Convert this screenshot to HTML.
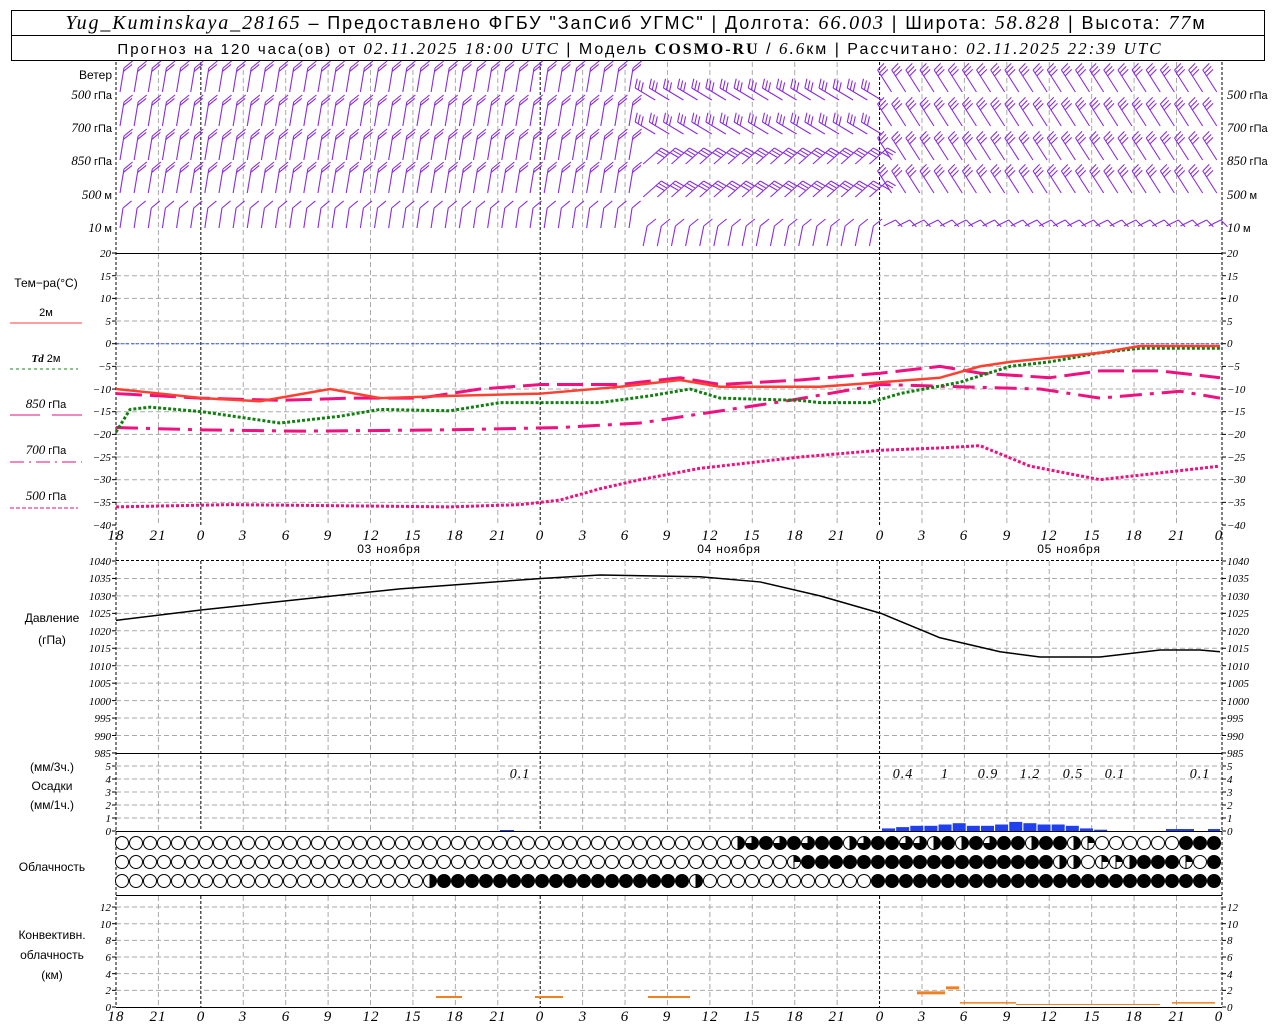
<!DOCTYPE html>
<html><head><meta charset="utf-8"><style>
html,body{margin:0;padding:0;background:#fff;}
svg{display:block;font-family:"Liberation Sans",sans-serif;}
.t{font-style:italic;font-family:"Liberation Serif",serif;}
.l{font-size:12px;}
</style></head><body>
<svg id="s" width="1280" height="1024" viewBox="0 0 1280 1024" xmlns="http://www.w3.org/2000/svg">
<rect x="0" y="0" width="1280" height="1024" fill="#fff"/>
<rect x="11.5" y="10.5" width="1253" height="50" fill="none" stroke="#000"/>
<line x1="11" y1="35.5" x2="1265" y2="35.5" stroke="#000"/>
<text x="636" y="29" text-anchor="middle" font-size="18" letter-spacing="1.9"><tspan font-family="Liberation Serif" font-style="italic" font-size="20">Yug_Kuminskaya_28165</tspan> – Предоставлено ФГБУ "ЗапСиб УГМС" | Долгота: <tspan font-family="Liberation Serif" font-style="italic" font-size="20">66.003</tspan> | Широта: <tspan font-family="Liberation Serif" font-style="italic" font-size="20">58.828</tspan> | Высота: <tspan font-family="Liberation Serif" font-style="italic" font-size="20">77</tspan>м</text>
<text x="640" y="54" text-anchor="middle" font-size="16" letter-spacing="2"><tspan font-size="15">Прогноз на 120 часа(ов) от </tspan><tspan font-family="Liberation Serif" font-style="italic" font-size="17">02.11.2025 18:00 UTC</tspan> | Модель <tspan font-family="Liberation Serif" font-weight="bold" font-size="16">COSMO-RU</tspan> / <tspan font-family="Liberation Serif" font-style="italic" font-size="17">6.6</tspan>км | Рассчитано: <tspan font-family="Liberation Serif" font-style="italic" font-size="17">02.11.2025 22:39 UTC</tspan></text>
<g id="g"></g>
<g class="l">
<text x="112" y="79" text-anchor="end">Ветер</text>
<text x="112" y="99" text-anchor="end" font-size="11"><tspan class="t" font-size="13">500</tspan> гПа</text>
<text x="112" y="132" text-anchor="end" font-size="11"><tspan class="t" font-size="13">700</tspan> гПа</text>
<text x="112" y="165" text-anchor="end" font-size="11"><tspan class="t" font-size="13">850</tspan> гПа</text>
<text x="112" y="199" text-anchor="end" font-size="11"><tspan class="t" font-size="13">500</tspan>  м</text>
<text x="112" y="232" text-anchor="end" font-size="11"><tspan class="t" font-size="13">10</tspan>   м</text>
<text x="1227" y="99" font-size="11"><tspan class="t" font-size="13">500</tspan> гПа</text>
<text x="1227" y="132" font-size="11"><tspan class="t" font-size="13">700</tspan> гПа</text>
<text x="1227" y="165" font-size="11"><tspan class="t" font-size="13">850</tspan> гПа</text>
<text x="1227" y="199" font-size="11"><tspan class="t" font-size="13">500</tspan>  м</text>
<text x="1227" y="232" font-size="11"><tspan class="t" font-size="13">10</tspan>   м</text>
<text x="46" y="287" text-anchor="middle">Тем−ра(°С)</text>
<text x="46" y="316" text-anchor="middle" font-size="11">2м</text>
<text x="46" y="362" text-anchor="middle" font-size="11"><tspan class="t" font-weight="bold">Td</tspan>  2м</text>
<text x="46" y="408" text-anchor="middle" font-size="11"><tspan class="t" font-size="13">850</tspan> гПа</text>
<text x="46" y="454" text-anchor="middle" font-size="11"><tspan class="t" font-size="13">700</tspan> гПа</text>
<text x="46" y="500" text-anchor="middle" font-size="11"><tspan class="t" font-size="13">500</tspan> гПа</text>
<text x="52" y="622" text-anchor="middle">Давление</text>
<text x="52" y="644" text-anchor="middle">(гПа)</text>
<text x="52" y="771" text-anchor="middle">(мм/3ч.)</text>
<text x="52" y="790" text-anchor="middle">Осадки</text>
<text x="52" y="809" text-anchor="middle">(мм/1ч.)</text>
<text x="52" y="871" text-anchor="middle">Облачность</text>
<text x="52" y="939" text-anchor="middle">Конвективн.</text>
<text x="52" y="959" text-anchor="middle">облачность</text>
<text x="52" y="979" text-anchor="middle">(км)</text>
<text x="389" y="553" text-anchor="middle" letter-spacing="0.8">03 ноября</text>
<text x="729" y="553" text-anchor="middle" letter-spacing="0.8">04 ноября</text>
<text x="1069" y="553" text-anchor="middle" letter-spacing="0.8">05 ноября</text>
</g>
<g class="t" font-size="14" letter-spacing="1">
<text x="520" y="778" text-anchor="middle">0.1</text>
<text x="903" y="778" text-anchor="middle">0.4</text>
<text x="945" y="778" text-anchor="middle">1</text>
<text x="988" y="778" text-anchor="middle">0.9</text>
<text x="1030" y="778" text-anchor="middle">1.2</text>
<text x="1073" y="778" text-anchor="middle">0.5</text>
<text x="1115" y="778" text-anchor="middle">0.1</text>
<text x="1200" y="778" text-anchor="middle">0.1</text>
</g>
<g class="t" font-size="15" text-anchor="middle" letter-spacing="1">
<text x="116" y="540">18</text><text x="158" y="540">21</text><text x="201" y="540">0</text><text x="243" y="540">3</text><text x="286" y="540">6</text><text x="328" y="540">9</text><text x="371" y="540">12</text><text x="413" y="540">15</text><text x="455" y="540">18</text><text x="498" y="540">21</text><text x="540" y="540">0</text><text x="583" y="540">3</text><text x="625" y="540">6</text><text x="667" y="540">9</text><text x="710" y="540">12</text><text x="752" y="540">15</text><text x="795" y="540">18</text><text x="837" y="540">21</text><text x="880" y="540">0</text><text x="922" y="540">3</text><text x="964" y="540">6</text><text x="1007" y="540">9</text><text x="1049" y="540">12</text><text x="1092" y="540">15</text><text x="1134" y="540">18</text><text x="1177" y="540">21</text><text x="1219" y="540">0</text>
</g>
<g class="t" font-size="15" text-anchor="middle" letter-spacing="1">
<text x="116" y="1021">18</text><text x="158" y="1021">21</text><text x="201" y="1021">0</text><text x="243" y="1021">3</text><text x="286" y="1021">6</text><text x="328" y="1021">9</text><text x="371" y="1021">12</text><text x="413" y="1021">15</text><text x="455" y="1021">18</text><text x="498" y="1021">21</text><text x="540" y="1021">0</text><text x="583" y="1021">3</text><text x="625" y="1021">6</text><text x="667" y="1021">9</text><text x="710" y="1021">12</text><text x="752" y="1021">15</text><text x="795" y="1021">18</text><text x="837" y="1021">21</text><text x="880" y="1021">0</text><text x="922" y="1021">3</text><text x="964" y="1021">6</text><text x="1007" y="1021">9</text><text x="1049" y="1021">12</text><text x="1092" y="1021">15</text><text x="1134" y="1021">18</text><text x="1177" y="1021">21</text><text x="1219" y="1021">0</text>
</g>
<g class="t" font-size="11">
<text x="111" y="257" text-anchor="end">20</text><text x="111" y="280" text-anchor="end">15</text><text x="111" y="302" text-anchor="end">10</text>
<text x="111" y="325" text-anchor="end">5</text>
<text x="111" y="347" text-anchor="end">0</text><text x="111" y="370" text-anchor="end">−5</text><text x="111" y="393" text-anchor="end">−10</text><text x="111" y="415" text-anchor="end">−15</text><text x="111" y="438" text-anchor="end">−20</text><text x="111" y="461" text-anchor="end">−25</text><text x="111" y="483" text-anchor="end">−30</text><text x="111" y="506" text-anchor="end">−35</text><text x="111" y="529" text-anchor="end">−40</text>
<text x="1227" y="257">20</text><text x="1227" y="280">15</text><text x="1227" y="302">10</text><text x="1227" y="325">5</text><text x="1227" y="347">0</text><text x="1227" y="370">−5</text><text x="1227" y="393">−10</text><text x="1227" y="415">−15</text><text x="1227" y="438">−20</text><text x="1227" y="461">−25</text><text x="1227" y="483">−30</text><text x="1227" y="506">−35</text><text x="1227" y="529">−40</text>
<text x="111" y="565" text-anchor="end">1040</text><text x="111" y="582" text-anchor="end">1035</text><text x="111" y="600" text-anchor="end">1030</text><text x="111" y="617" text-anchor="end">1025</text><text x="111" y="635" text-anchor="end">1020</text><text x="111" y="652" text-anchor="end">1015</text><text x="111" y="670" text-anchor="end">1010</text><text x="111" y="687" text-anchor="end">1005</text><text x="111" y="705" text-anchor="end">1000</text><text x="111" y="722" text-anchor="end">995</text><text x="111" y="740" text-anchor="end">990</text><text x="111" y="757" text-anchor="end">985</text>
<text x="1227" y="565">1040</text><text x="1227" y="582">1035</text><text x="1227" y="600">1030</text><text x="1227" y="617">1025</text><text x="1227" y="635">1020</text><text x="1227" y="652">1015</text><text x="1227" y="670">1010</text><text x="1227" y="687">1005</text><text x="1227" y="705">1000</text><text x="1227" y="722">995</text><text x="1227" y="740">990</text><text x="1227" y="757">985</text>
<text x="111" y="770" text-anchor="end">5</text><text x="111" y="783" text-anchor="end">4</text><text x="111" y="796" text-anchor="end">3</text><text x="111" y="809" text-anchor="end">2</text><text x="111" y="822" text-anchor="end">1</text><text x="111" y="835" text-anchor="end">0</text>
<text x="1227" y="770">5</text><text x="1227" y="783">4</text><text x="1227" y="796">3</text><text x="1227" y="809">2</text><text x="1227" y="822">1</text><text x="1227" y="835">0</text>
<text x="111" y="911" text-anchor="end">12</text><text x="111" y="928" text-anchor="end">10</text><text x="111" y="944" text-anchor="end">8</text><text x="111" y="961" text-anchor="end">6</text><text x="111" y="978" text-anchor="end">4</text><text x="111" y="994" text-anchor="end">2</text><text x="111" y="1011" text-anchor="end">0</text>
<text x="1227" y="911">12</text><text x="1227" y="928">10</text><text x="1227" y="944">8</text><text x="1227" y="961">6</text><text x="1227" y="978">4</text><text x="1227" y="994">2</text><text x="1227" y="1011">0</text>
</g>
</svg>
<script>
(function(){
var NS="http://www.w3.org/2000/svg",g=document.getElementById('g');
function el(n,a){var e=document.createElementNS(NS,n);for(var k in a)e.setAttribute(k,a[k]);g.appendChild(e);return e;}
function ln(x1,y1,x2,y2,c,w,d){var a={x1:x1,y1:y1,x2:x2,y2:y2,stroke:c,'stroke-width':w||1};if(d)a['stroke-dasharray']=d;return el('line',a);}
var X0=116;
function hg(y){ln(X0,y,1222,y,'#aaa',1,'5,3');}
for(var v=15;v>=-35;v-=5)hg(343.7-v*4.533);
for(var p=1035;p>=990;p-=5)hg(561+(1040-p)*3.49);
for(var m=1;m<=5;m++)hg(831-m*13);
for(var k=2;k<=12;k+=2)hg(1007-k*8.33);
for(var i=1;i<=25;i++){var x=X0+i*42.42;var mid=(i%8==2);
 [[62,525],[561,832],[896,1007]].forEach(function(r){ln(x,r[0],x,r[1],mid?'#000':'#aaa',1,mid?'3,2':'5,3');});}
ln(X0,343.7,1222,343.7,'#3050ff',1,'3,2');
ln(X0,253.5,1222,253.5,'#000',1);ln(X0,753.5,1222,753.5,'#000',1);ln(X0,831.5,1222,831.5,'#000',1);
ln(X0,895.5,1222,895.5,'#000',1);ln(X0,1007.5,1222,1007.5,'#000',1);ln(X0,560.5,1222,560.5,'#000',1,'3,2');
ln(1222,62,1222,1007,'#000',1,'3,2');ln(X0,62,X0,1007,'#000',1,'3,2');
function tk(y){ln(1222,y,1226,y,'#000',1);ln(112,y,116,y,'#000',1);}
for(var v=20;v>=-40;v-=5)tk(343.7-v*4.533);
for(var p=1040;p>=985;p-=5)tk(561+(1040-p)*3.49);
for(var m=0;m<=5;m++)tk(831-m*13);
for(var k=0;k<=12;k+=2)tk(1007-k*8.33);
ln(10,323,82,323,'#ff4040',1);ln(10,369,78,369,'#208020',1,'3,3');
ln(10,415,40,415,'#e0107f',1);ln(52,415,82,415,'#e0107f',1);
ln(10,462,82,462,'#e0107f',1,'14,5,2,5');ln(10,508,78,508,'#e0107f',1,'4,2');
function T(v){return 343.7-v*4.533;}
function curve(pts,f,c,w,d){var s='';pts.forEach(function(p,i){s+=(i?'L':'M')+p[0]+','+f(p[1]);});var a={d:s,fill:'none',stroke:c,'stroke-width':w,'stroke-linejoin':'round'};if(d)a['stroke-dasharray']=d;el('path',a);}
curve([[116,-36],[230,-35.5],[450,-36],[520,-35.5],[560,-34.5],[600,-32],[640,-30],[700,-27.5],[800,-25],[881,-23.5],[940,-23],[980,-22.5],[1030,-27],[1100,-30],[1140,-29],[1220,-27]],T,'#f0107f',3,'3,2');
curve([[116,-18.5],[200,-19],[300,-19.3],[450,-19],[560,-18.5],[640,-17.5],[700,-15.5],[790,-12.5],[881,-9],[960,-9.5],[1040,-10],[1100,-12],[1180,-10.5],[1220,-12]],T,'#f0107f',3,'22,8,4,8');
curve([[116,-11],[200,-12],[280,-12.5],[350,-12],[420,-12],[480,-10],[541,-9],[620,-9],[680,-7.5],[720,-9],[800,-8],[881,-6.5],[940,-5],[980,-6.5],[1050,-7.5],[1100,-6],[1160,-6],[1220,-7.5]],T,'#f0107f',3,'26,8');
curve([[116,-19.5],[130,-14.5],[150,-14],[202,-15],[280,-17.5],[340,-16],[380,-14.5],[450,-14.8],[500,-13],[541,-13],[600,-13],[650,-11.5],[690,-10],[720,-12],[800,-12.5],[820,-13],[870,-13],[900,-11],[960,-8.5],[1010,-5],[1050,-4],[1100,-2],[1140,-1],[1220,-1]],T,'#108010',3,'3,2');
curve([[116,-10],[160,-11],[202,-12],[260,-12.7],[330,-10],[380,-12],[450,-11.5],[541,-11],[620,-9.5],[680,-8],[720,-9.5],[760,-9.5],[820,-9.5],[881,-8.5],[940,-7.5],[980,-5],[1010,-4],[1100,-2],[1140,-0.5],[1220,-0.5]],T,'#ff4030',2.5);
curve([[116,1023],[202,1026],[300,1029],[400,1032],[541,1035],[600,1036],[700,1035.5],[760,1034],[820,1030],[881,1025],[940,1018],[1000,1014],[1040,1012.5],[1100,1012.5],[1160,1014.5],[1200,1014.5],[1220,1014]],function(p){return 561+(1040-p)*3.49;},'#000',1.5);
var pr=[0.2,0.3,0.4,0.4,0.5,0.6,0.4,0.4,0.5,0.7,0.6,0.5,0.5,0.4,0.2,0.1];
pr.forEach(function(v,i){var x=881+i*14.14;el('rect',{x:x+1,y:831-v*13,width:13,height:v*13,fill:'#2040f0'});});
el('rect',{x:1166,y:829,width:28,height:2,fill:'#2040f0'});el('rect',{x:1208,y:829,width:12,height:2,fill:'#2040f0'});el('rect',{x:500,y:830,width:14,height:1,fill:'#2040f0'});
function cb(x1,x2,v,h){el('rect',{x:x1,y:1007-v*8.33-h/2,width:x2-x1,height:h,fill:'#f08020'});}
cb(436,462,1.2,2);cb(535,563,1.2,2);cb(648,690,1.2,2);cb(917,945,1.7,3);cb(946,959,2.3,3);cb(960,1016,0.5,1.5);cb(1016,1160,0.3,1);cb(1172,1215,0.5,1.5);
var rows=[[843,function(i){return i<44?0:(i>=70&&i<76)?0:([0.5,0.75,1,0.75,1,0.75,1,1,0.5,0.75,1,1,0.75,0.75,0.5,1,0.5,1,0.75,1,1,0.5,1,1,0.5,0.25,0.5][i-44]||1);}],
[862,function(i){return i<48?0:i==48?0.25:(i>=67&&i<69)?0.5:(i==69?0:(i==70||i==71)?0.25:(i==72?0.5:(i==76?0.25:(i==77?0:1))));}],
[881,function(i){return (i<22)?0:(i==22?0.5:(i<41?1:(i==41?0.5:(i<54?0:1))));}]];
rows.forEach(function(r){for(var i=0;i<79;i++){var cx=122+i*14.0,cy=r[0],f=r[1](i),R=6.5;
 el('circle',{cx:cx,cy:cy,r:R,fill:f>=1?'#000':'#fff',stroke:'#000','stroke-width':1});
 if(f>0&&f<1){var a=f*2*Math.PI,x2=cx+R*Math.sin(a),y2=cy-R*Math.cos(a);
  el('path',{d:'M'+cx+','+cy+'L'+cx+','+(cy-R)+'A'+R+','+R+' 0 '+(f>0.5?1:0)+' 1 '+x2+','+y2+'Z',fill:'#000'});
  ln(cx,cy-R,cx,cy+R,'#000',1);}
}});
var C='#8a2be2';
function barb(x,y,dx,dy,n){var tx=x+dx,ty=y+dy;ln(x,y,tx,ty,C,1.1);var L=Math.sqrt(dx*dx+dy*dy),ux=dx/L,uy=dy/L,px=-uy,py=ux;if(px<0){px=-px;py=-py;}
 if(dy<0&&Math.abs(dy)>Math.abs(dx)){px=0.9;py=-0.45;}
 for(var k=0;k<n;k++){var bx=tx-ux*k*3.5,by=ty-uy*k*3.5;ln(bx,by,bx+px*9+ux*3,by+py*9+uy*3,C,1.1);}}
var rb=[92,126,160,193,228];
for(var i=0;i<78;i++){var x=X0+4+i*14.14;
 rb.forEach(function(y,r){
  if(x<630){ if(r==4)barb(x,y,3,-20,1); else barb(x,y,4,-24,2);}
  else if(x<880){ if(r<2)barb(x+12,y+8,-20,-12,3); else if(r<4)barb(x,y+4,18,-16,3); else barb(x,y+18,4,-20,1);}
  else { if(r<4)barb(x+8,y,-14,-22,3); else barb(x,y-2,12,-6,1);}
 });}
})();
</script>
</body></html>
